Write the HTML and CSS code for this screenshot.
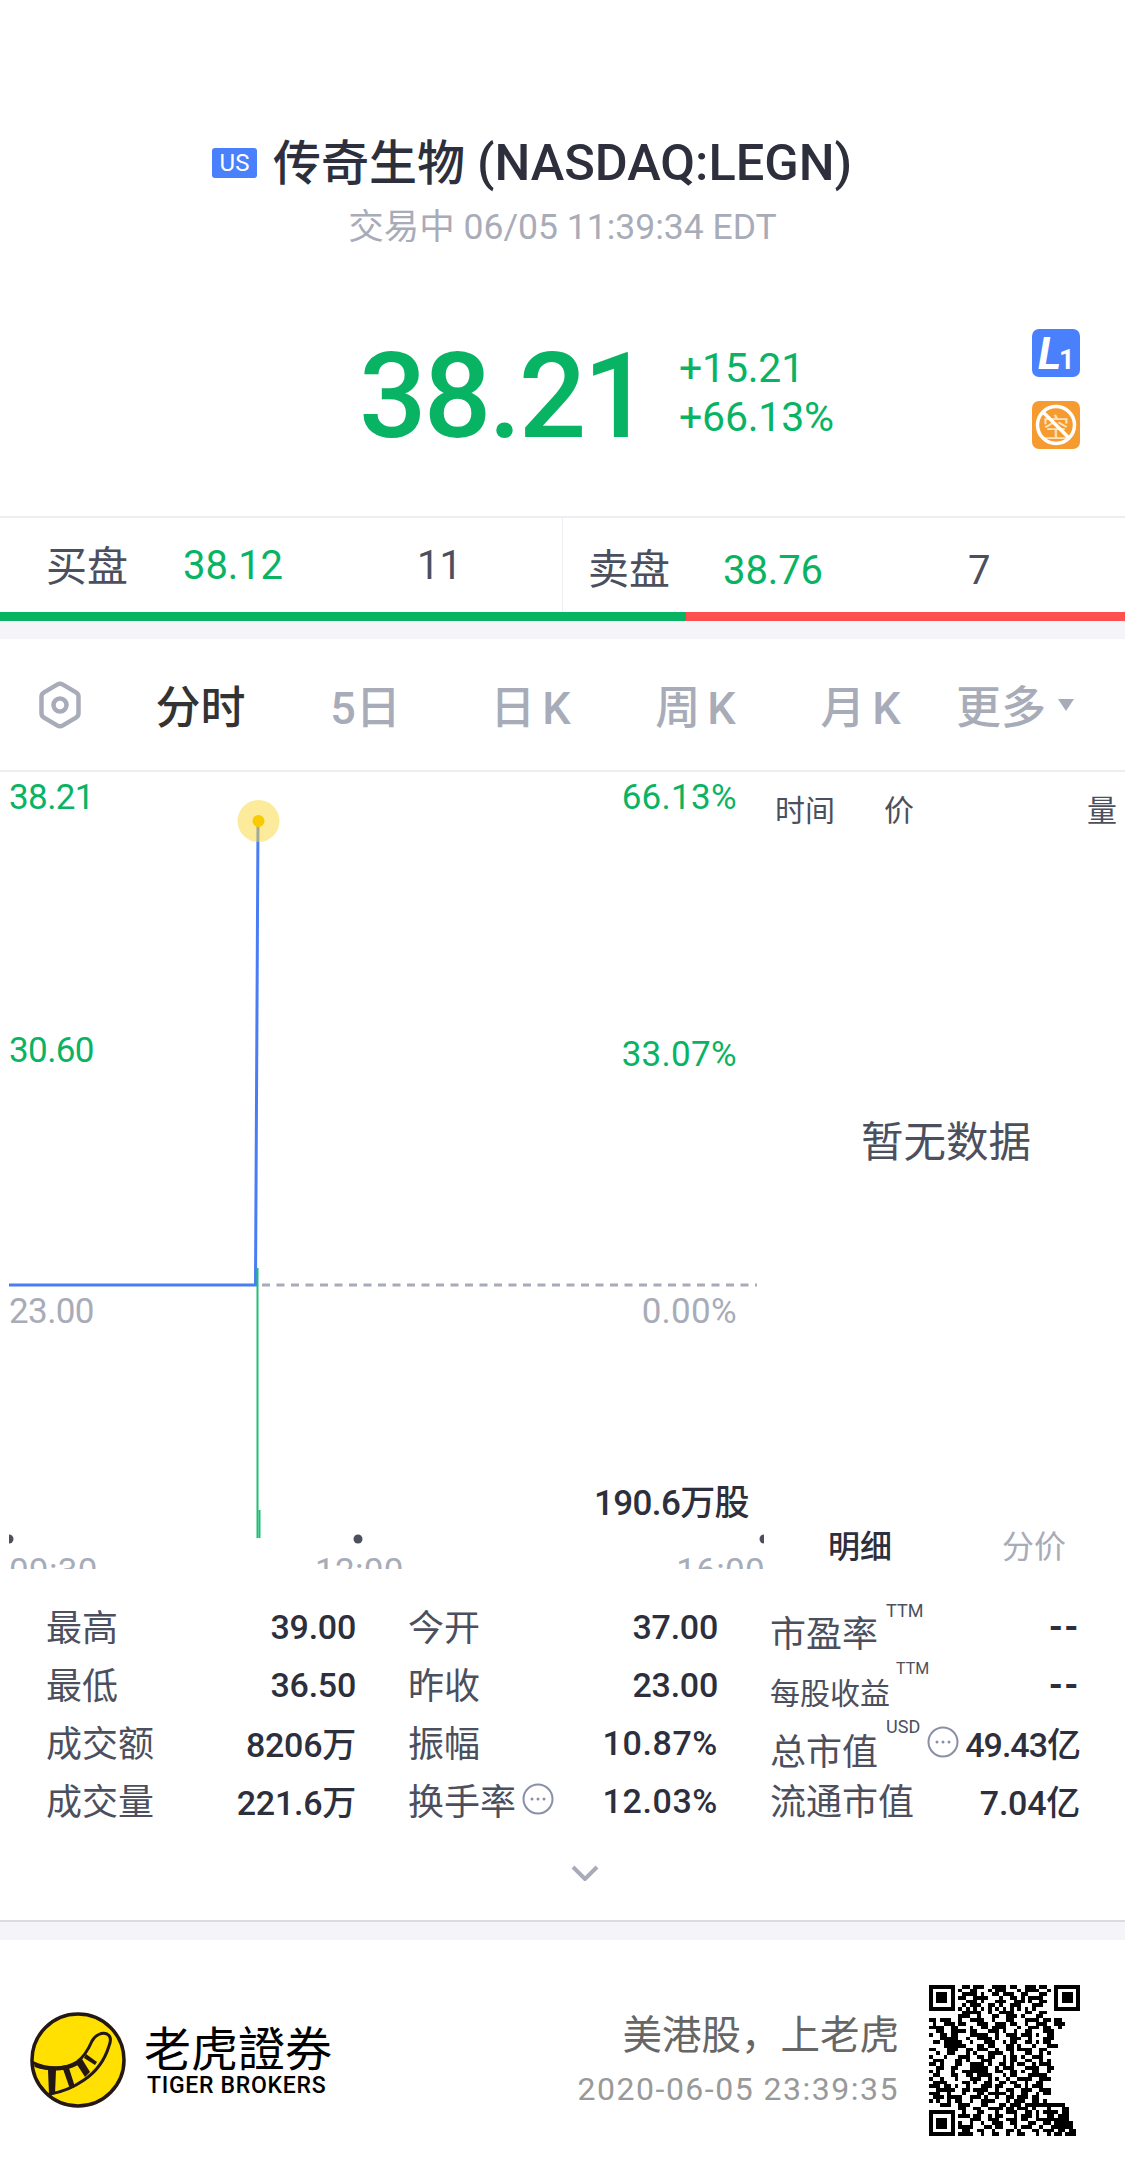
FILE: index.html
```html
<!DOCTYPE html>
<html lang="zh">
<head>
<meta charset="utf-8">
<title>传奇生物 (NASDAQ:LEGN)</title>
<link rel="stylesheet" href="styles.css">
</head>
<body>
<div class="page">
  <header class="head">
    <div class="title-row">
      <span class="badge">US</span>
      <h1 class="title">传奇生物 <span class="title-latin">(NASDAQ:LEGN)</span></h1>
    </div>
    <div class="status">交易中 06/05 11:39:34 EDT</div>
    <div class="price-row">
      <div class="price">38.21</div>
      <div class="change"><div>+15.21</div><div>+66.13%</div></div>
      <div class="flags">
        <svg class="flag" viewBox="0 0 48 48"><rect class="flag-blue" width="48" height="48" rx="7"/><text class="flag-l" x="6" y="40">L</text><text class="flag-one" x="27" y="40">1</text></svg>
        <svg class="flag" viewBox="0 0 48 48"><rect class="flag-orange" width="48" height="48" rx="7"/><text class="flag-kong" x="24" y="37">空</text><circle class="flag-ring" cx="24" cy="24" r="18.5"/><path class="flag-ring" d="M11 11 37 37"/></svg>
      </div>
    </div>
  </header>

  <section class="quote">
    <div class="side side-bid"><span class="q-label q-l1">买盘</span><span class="q-price q-p1">38.12</span><span class="q-qty">11</span></div>
    <div class="side side-ask"><span class="q-label q-l2">卖盘</span><span class="q-price q-p2">38.76</span><span class="q-qty">7</span></div>
  </section>
  <div class="bar"><div class="bar-buy"></div><div class="bar-sell"></div></div>
  <div class="band"></div>

  <nav class="tabs">
    <svg class="hex" viewBox="0 0 42 48"><path class="hex-line" d="M18.5 3.4a5 5 0 0 1 5 0l13.5 8a5 5 0 0 1 2.5 4.3v16.6a5 5 0 0 1-2.5 4.3l-13.5 8a5 5 0 0 1-5 0l-13.5-8a5 5 0 0 1-2.5-4.3V15.700a5 5 0 0 1 2.500-4.300z"/><circle class="hex-line" cx="21" cy="24" r="6.500"/></svg>
    <span class="tab tab-on">分时</span>
    <span class="tab">5日</span>
    <span class="tab">日 K</span>
    <span class="tab">周 K</span>
    <span class="tab">月 K</span>
    <span class="tab-more">更多<i class="caret"></i></span>
  </nav>

  <section class="chart-area">
    <div class="chart">
      <svg class="chart-svg" viewBox="0 0 775 797">
        <defs><clipPath id="plot"><rect x="9" y="0" width="755" height="797"/></clipPath></defs>
        <path class="dash" d="M262 513H757"/>
        <path class="line" d="M9 513H255.500L258 49"/>
        <path class="vol" d="M257.500 496V766"/>
        <path class="vol" d="M259.500 738V766"/>
        <circle class="halo" cx="258.500" cy="49" r="21"/>
        <circle class="dot" cx="258.500" cy="49" r="6"/>
        <g clip-path="url(#plot)">
          <circle class="tick" cx="9" cy="767" r="4.500"/>
          <circle class="tick" cx="358" cy="767" r="4.500"/>
          <circle class="tick" cx="764" cy="767" r="4.500"/>
        </g>
      </svg>
      <span class="ax up al y1">38.21</span>
      <span class="ax up al y2">30.60</span>
      <span class="ax al y3">23.00</span>
      <span class="ax up ar y1">66.13%</span>
      <span class="ax up ar y2b">33.07%</span>
      <span class="ax ar y3">0.00%</span>
      <span class="vol-text">190.6万股</span>
      <span class="ax time t1">09:30</span>
      <span class="ax time t2">12:00</span>
      <span class="ax time t3">16:00</span>
    </div>
    <aside class="ticks">
      <div class="ticks-head"><span class="th-time">时间</span><span class="th-price">价</span><span class="th-vol">量</span></div>
      <div class="empty">暂无数据</div>
      <div class="ticks-tabs"><span class="tt-on">明细</span><span class="tt-off">分价</span></div>
    </aside>
  </section>

  <section class="stats">
    <div class="grid">
      <div class="cell"><span class="k">最高</span><span class="v">39.00</span></div>
      <div class="cell"><span class="k">今开</span><span class="v">37.00</span></div>
      <div class="cell"><span class="k k-low k-pe">市盈率<sup class="sup">TTM</sup></span><span class="v v-dash">--</span></div>
      <div class="cell"><span class="k">最低</span><span class="v">36.50</span></div>
      <div class="cell"><span class="k">昨收</span><span class="v">23.00</span></div>
      <div class="cell"><span class="k k-low k-small">每股收益<sup class="sup">TTM</sup></span><span class="v v-dash">--</span></div>
      <div class="cell"><span class="k">成交额</span><span class="v">8206万</span></div>
      <div class="cell"><span class="k">振幅</span><span class="v v-pct">10.87%</span></div>
      <div class="cell"><span class="k k-low">总市值<sup class="sup">USD</sup><svg class="info" viewBox="0 0 32 32"><circle class="info-ring" cx="16" cy="16" r="14.500"/><circle class="info-dot" cx="10" cy="16" r="1.500"/><circle class="info-dot" cx="16" cy="16" r="1.500"/><circle class="info-dot" cx="22" cy="16" r="1.500"/></svg></span><span class="v v-tight">49.43亿</span></div>
      <div class="cell"><span class="k">成交量</span><span class="v">221.6万</span></div>
      <div class="cell"><span class="k">换手率<svg class="info" viewBox="0 0 32 32"><circle class="info-ring" cx="16" cy="16" r="14.500"/><circle class="info-dot" cx="10" cy="16" r="1.500"/><circle class="info-dot" cx="16" cy="16" r="1.500"/><circle class="info-dot" cx="22" cy="16" r="1.500"/></svg></span><span class="v v-pct">12.03%</span></div>
      <div class="cell"><span class="k">流通市值</span><span class="v">7.04亿</span></div>
    </div>
    <svg class="chevron" viewBox="0 0 28 16"><path d="M2 2 14 14 26 2"/></svg>
  </section>
  <div class="band"></div>

  <footer class="foot">
    <div class="brand">
      <svg class="logo" viewBox="0 0 96 96">
        <circle class="logo-disc" cx="48" cy="48" r="46"/>
        <path class="logo-tail" d="M5 53C18 58 36 57 47 50 55 44 59 36 62 29 65 23 72 20 77 22 81 24 81 29 79 34 75 47 66 60 54 68 44 75 32 80 20 82"/>
        <path class="logo-stripe" d="M3 49C16 56 36 56 47 49L48 53C36 60 16 60 5 55ZM18 58H26L25 82 19 83ZM33 57 39 56 45 75 40 77ZM46 51 52 47 60 60 55 65ZM56 42 67 50 65 53 54 46Z"/>
      </svg>
      <div class="brand-text">
        <div class="brand-cn">老虎證券</div>
        <div class="brand-en">TIGER BROKERS</div>
      </div>
    </div>
    <div class="slogan">
      <div class="slogan-cn">美港股，上老虎</div>
      <div class="slogan-time">2020-06-05 23:39:35</div>
    </div>
    <svg class="qr" viewBox="0 0 41 41" shape-rendering="crispEdges">
      <path class="qr-run" d="M9 .5h2m1 0h3m2 0h4m1 0h2m2 0h3m1 0h2M8 1.500h1m2 0h2m3 0h1m1 0h3m3 0h1m1 0h4m2 0h1M9 2.500h4m1 0h1m2 0h2m1 0h3m2 0h2m3 0h2M8 3.500h2m2 0h4m3 0h1m2 0h2m1 0h1m1 0h4M10 4.500h3m1 0h1m3 0h3m2 0h3m1 0h1m2 0h2M9 5.500h1m1 0h3m2 0h2m1 0h1m2 0h3m3 0h3M8 6.500h1m1 0h1m1 0h1m1 0h1m1 0h1m1 0h1m1 0h1m1 0h1m1 0h1m1 0h1m1 0h1M9 7.500h5m2 0h1m2 0h4m3 0h2m2 0h2M8 8.500h3m2 0h1m3 0h2m2 0h3m1 0h1m3 0h2M0 9.500h2m1 0h3m2 0h1m2 0h4m2 0h1m3 0h2m3 0h4m1 0h2m1 0h2M1 10.500h1m2 0h3m1 0h2m3 0h3m2 0h3m1 0h2m2 0h1m2 0h3m2 0h3M0 11.500h4m2 0h2m3 0h1m2 0h2m1 0h4m3 0h1m2 0h3m1 0h2m2 0h1M2 12.500h2m2 0h4m1 0h2m3 0h3m1 0h1m2 0h1m2 0h2m3 0h3M0 13.500h1m2 0h2m1 0h2m3 0h5m2 0h1m2 0h3m1 0h3m1 0h1m2 0h2M3 14.500h5m2 0h1m2 0h4m1 0h1m3 0h3m2 0h1m3 0h3M1 15.500h2m1 0h5m2 0h1m3 0h3m2 0h1m1 0h2m2 0h2m1 0h1m1 0h2M4 16.500h6m3 0h2m1 0h2m3 0h2m1 0h1m3 0h1m3 0h3M0 17.500h2m3 0h3m2 0h2m1 0h3m2 0h1m2 0h2m1 0h4m2 0h2M2 18.500h1m2 0h2m3 0h1m1 0h1m3 0h4m2 0h1m3 0h2m2 0h1m1 0h1M0 19.500h1m3 0h1m3 0h3m2 0h2m1 0h2m2 0h1m1 0h2m1 0h1m2 0h3M1 20.500h3m3 0h2m1 0h1m3 0h3m3 0h1m1 0h2m2 0h2m2 0h1m1 0h1M0 21.500h2m1 0h1m3 0h2m2 0h4m1 0h1m2 0h2m1 0h1m1 0h2m2 0h1m1 0h3M2 22.500h2m2 0h2m3 0h5m2 0h1m1 0h3m3 0h4m2 0h2M0 23.500h1m1 0h1m3 0h1m2 0h7m2 0h2m2 0h2m1 0h1m2 0h2m2 0h1M1 24.500h2m3 0h2m2 0h2m1 0h4m3 0h1m1 0h2m3 0h5M0 25.500h1m2 0h1m3 0h1m3 0h3m2 0h1m1 0h1m2 0h1m2 0h4m2 0h3M1 26.500h4m4 0h2m1 0h1m2 0h2m2 0h2m1 0h2m2 0h1m2 0h2M0 27.500h3m1 0h2m1 0h1m2 0h1m3 0h3m1 0h2m3 0h2m1 0h1m1 0h3M2 28.500h5m2 0h2m1 0h4m2 0h1m2 0h2m2 0h3m2 0h3M0 29.500h3m2 0h1m3 0h1m3 0h2m1 0h5m1 0h1m2 0h2m2 0h1m1 0h2M1 30.500h3m1 0h4m2 0h3m1 0h1m2 0h1m2 0h2m1 0h3m1 0h2M0 31.500h1m1 0h1m2 0h1m1 0h2m2 0h1m2 0h4m3 0h1m1 0h3m2 0h2m1 0h1M3 32.500h3m2 0h3m3 0h2m3 0h2m1 0h3m1 0h8M8 33.500h2m2 0h2m2 0h4m1 0h2m1 0h3m1 0h1m3 0h1m3 0h2M9 34.500h1m3 0h2m3 0h1m2 0h3m2 0h2m1 0h1m1 0h1m1 0h1m2 0h2M8 35.500h3m1 0h2m2 0h1m1 0h2m3 0h1m1 0h3m1 0h1m3 0h1m1 0h3M11 36.500h3m2 0h3m2 0h3m1 0h2m2 0h6m2 0h1M8 37.500h1m2 0h1m2 0h1m2 0h3m2 0h2m3 0h2m2 0h2m1 0h5M8 38.500h4m3 0h2m1 0h2m3 0h1m1 0h3m2 0h1m2 0h6M9 39.500h2m2 0h2m2 0h1m3 0h2m1 0h1m3 0h2m1 0h3m1 0h2m1 0h2M8 40.500h4m2 0h1m2 0h2m2 0h1m2 0h2m3 0h1m2 0h1m1 0h2m1 0h3"/>
      <g class="finder"><rect class="f-w" width="8" height="8"/><path d="M0 0h7v7H0zM1 1v5h5V1zM2 2h3v3H2z" fill-rule="evenodd"/></g>
      <g class="finder"><rect class="f-w" x="33" width="8" height="8"/><path d="M34 0h7v7h-7zM35 1v5h5V1zM36 2h3v3h-3z" fill-rule="evenodd"/></g>
      <g class="finder"><rect class="f-w" y="33" width="8" height="8"/><path d="M0 34h7v7H0zM1 35v5h5v-5zM2 36h3v3H2z" fill-rule="evenodd"/></g>
      <path d="M32 32h5v5h-5zM33 33v3h3v-3zM34 34h1v1h-1z" fill-rule="evenodd"/>
    </svg>
  </footer>
</div>
</body>
</html>
```
FILE: styles.css
```css
* { box-sizing: border-box; }
html, body { margin: 0; padding: 0; background: #fff; }
body { font-family: Roboto, "Noto Sans CJK SC", sans-serif; color: #2d2f3d; }
.page { width: 1125px; height: 2179px; overflow: hidden; }

/* header */
.head { height: 516px; padding-top: 134px; }
.title-row { display: flex; align-items: center; padding-left: 212px; height: 58px; }
.badge { width: 45px; height: 30px; border-radius: 3px; background: #4a80fb; color: #fff; font-size: 24px; line-height: 30px; text-align: center; margin-right: 16px; }
.title { margin: 0; font-size: 48px; font-weight: 500; line-height: 58px; white-space: nowrap; }
.title-latin { font-size: 50.500px; }
.status { margin-top: 15px; height: 40px; line-height: 40px; font-size: 35.500px; text-align: center; color: #a8acb9; }
.price-row { display: flex; margin-top: 82px; padding-left: 359px; padding-right: 45px; height: 120px; }
.price { width: 320px; padding-top: 8px; font-size: 119px; line-height: 120px; color: #08b463; letter-spacing: -2.900px; font-weight: 500; }
.change { font-size: 41px; line-height: 49px; color: #08b463; padding-top: 15px; letter-spacing: -.2px; }
.flags { margin-left: auto; display: flex; flex-direction: column; gap: 24px; }
.flag { width: 48px; height: 48px; display: block; }
.flag-blue { fill: #4a80fb; }
.flag-orange { fill: #f59b30; }
.flag-l { font-size: 44px; font-weight: 700; font-style: italic; fill: #fff; }
.flag-one { font-size: 27px; font-weight: 700; fill: #fff; }
.flag-kong { font-size: 27px; text-anchor: middle; fill: #fde0b4; }
.flag-ring { fill: none; stroke: #fff; stroke-width: 3.500; }

/* bid / ask */
.quote { display: flex; height: 96px; border-top: 2px solid #eeeef2; }
.side { display: flex; align-items: center; height: 94px; }
.side-bid { width: 563px; border-right: 1px solid #eeeef2; padding-left: 46px; }
.side-ask { flex: 1; padding-left: 25px; padding-top: 10px; }
.q-label { font-size: 41px; color: #4c4f5e; padding-bottom: 5px; }
.q-l1 { width: 137px; }
.q-l2 { width: 135px; padding-bottom: 8px; }
.q-price { font-size: 40px; color: #08b463; letter-spacing: -.1px; }
.q-p1 { width: 234px; }
.q-p2 { width: 245px; }
.q-qty { font-size: 40px; color: #4c4f5e; }
.bar { display: flex; height: 9px; }
.bar-buy { width: 686px; background: #08b463; }
.bar-sell { flex: 1; background: #ff5050; }
.band { height: 18px; background: #f5f5f9; }

/* period tabs */
.tabs { display: flex; align-items: center; height: 133px; border-bottom: 2px solid #eeeef2; padding-left: 39px; }
.hex { width: 42px; height: 48px; margin-right: 37px; flex: none; }
.hex-line { fill: none; stroke: #a8acb9; stroke-width: 4.500; }
.tab { width: 165px; text-align: center; font-size: 45px; color: #a8acb9; font-weight: 500; white-space: nowrap; word-spacing: -4px; }
.tab-on { color: #333; }
.tab-more { display: flex; align-items: center; margin-left: 13px; font-size: 45px; color: #a8acb9; font-weight: 500; }
.caret { width: 0; height: 0; margin-left: 12px; border-left: 8.500px solid transparent; border-right: 8.500px solid transparent; border-top: 12px solid #a8acb9; }

/* chart */
.chart-area { display: flex; height: 797px; overflow: hidden; }
.chart { position: relative; width: 775px; height: 797px; flex: none; overflow: hidden; }
.chart-svg { position: absolute; left: 0; top: 0; width: 775px; height: 797px; }
.line { fill: none; stroke: #4a7cf6; stroke-width: 3; }
.dash { stroke: #a8acb9; stroke-width: 3; stroke-dasharray: 8 6.500; fill: none; }
.vol { stroke: #1fbf75; stroke-width: 2; fill: none; }
.halo { fill: #f9d738; fill-opacity: .5; }
.dot { fill: #f8cb00; }
.tick { fill: #4c4f5e; }
.ax { position: absolute; font-size: 35px; line-height: 40px; color: #a8acb9; letter-spacing: -.6px; white-space: nowrap; }
.up { color: #08b463; }
.al { left: 9px; }
.ar { right: 38px; letter-spacing: .3px; }
.y1 { top: 6px; }
.y2 { top: 259px; }
.y2b { top: 263px; }
.y3 { top: 520px; }
.vol-text { position: absolute; right: 26px; top: 712px; font-size: 35px; line-height: 40px; font-weight: 500; white-space: nowrap; letter-spacing: -.6px; }
.time { top: 780px; font-size: 35px; letter-spacing: .3px; }
.t1 { left: 9px; }
.t2 { left: 315px; }
.t3 { right: 10px; }

/* tick panel */
.ticks { flex: 1; display: flex; flex-direction: column; }
.ticks-head { height: 71px; display: flex; align-items: center; font-size: 30px; color: #4c4f5e; padding-right: 8px; }
.th-time { width: 109px; }
.th-vol { margin-left: auto; }
.empty { height: 590px; display: flex; align-items: center; justify-content: center; font-size: 42.500px; color: #4c4f5e; padding-right: 8px; }
.ticks-tabs { margin-top: auto; height: 44px; display: flex; font-size: 32px; line-height: 44px; padding-left: 53px; }
.tt-on { width: 174px; font-weight: 500; }
.tt-off { color: #a8acb9; }

/* stats */
.stats { height: 353px; border-bottom: 2px solid #dcdce0; padding-top: 27px; display: flex; flex-direction: column; }
.grid { display: grid; grid-template-columns: repeat(3, 310px); grid-auto-rows: 58px; column-gap: 52px; padding-left: 46px; }
.cell { display: flex; align-items: center; justify-content: space-between; white-space: nowrap; }
.k { display: flex; align-items: center; font-size: 36px; color: #4c4f5e; position: relative; }
.k-low { padding-top: 16px; }
.k-pe { padding-top: 12px; }
.k-small { font-size: 30px; }
.v { font-size: 34px; font-weight: 500; letter-spacing: -.25px; padding-top: 3px; }
.v-pct { letter-spacing: .6px; }
.v-tight { letter-spacing: -1px; }
.v-dash { font-size: 36px; font-weight: 700; letter-spacing: 1.500px; }
.sup { position: absolute; left: 100%; top: 10px; margin-left: 8px; font-size: 18px; line-height: 20px; color: #4c4f5e; }
.k-pe .sup { top: 8px; }
.k-small .sup { top: 6px; margin-left: 6px; font-size: 16px; }
.k-low .info { position: absolute; left: 151px; top: 19px; }
.info { width: 32px; height: 32px; margin-left: 6px; flex: none; }
.info-ring { fill: none; stroke: #8a8fa8; stroke-width: 2; }
.info-dot { fill: #8a8fa8; }
.chevron { width: 28px; height: 16px; margin: 37px 0 0 571px; display: block; flex: none; }
.chevron path { fill: none; stroke: #a8acb9; stroke-width: 4; }

/* footer */
.foot { height: 240px; display: flex; align-items: center; padding: 0 45px 0 30px; }
.brand { display: flex; align-items: center; }
.logo { width: 96px; height: 96px; flex: none; }
.logo-disc { fill: #ffe000; stroke: #231815; stroke-width: 3.500; }
.logo-tail { fill: none; stroke: #231815; stroke-width: 3; stroke-linejoin: round; }
.logo-stripe { fill: #231815; }
.brand-text { margin-left: 18px; width: 190px; }
.brand-cn { font-family: "Noto Sans CJK TC", sans-serif; font-size: 47px; line-height: 52px; color: #000; white-space: nowrap; }
.brand-en { font-size: 23px; line-height: 28px; font-weight: 500; color: #000; white-space: nowrap; padding-left: 3px; letter-spacing: .7px; }
.slogan { margin-left: auto; text-align: right; }
.slogan-cn { font-size: 39.500px; line-height: 50px; color: #666; }
.slogan-time { margin-top: 8px; font-size: 32px; line-height: 40px; color: #999; letter-spacing: 1.500px; }
.qr { width: 151px; height: 151px; margin-left: 30px; flex: none; }
.qr-run { fill: none; stroke: #000; stroke-width: 1; }
.f-w { fill: #fff; }
```
